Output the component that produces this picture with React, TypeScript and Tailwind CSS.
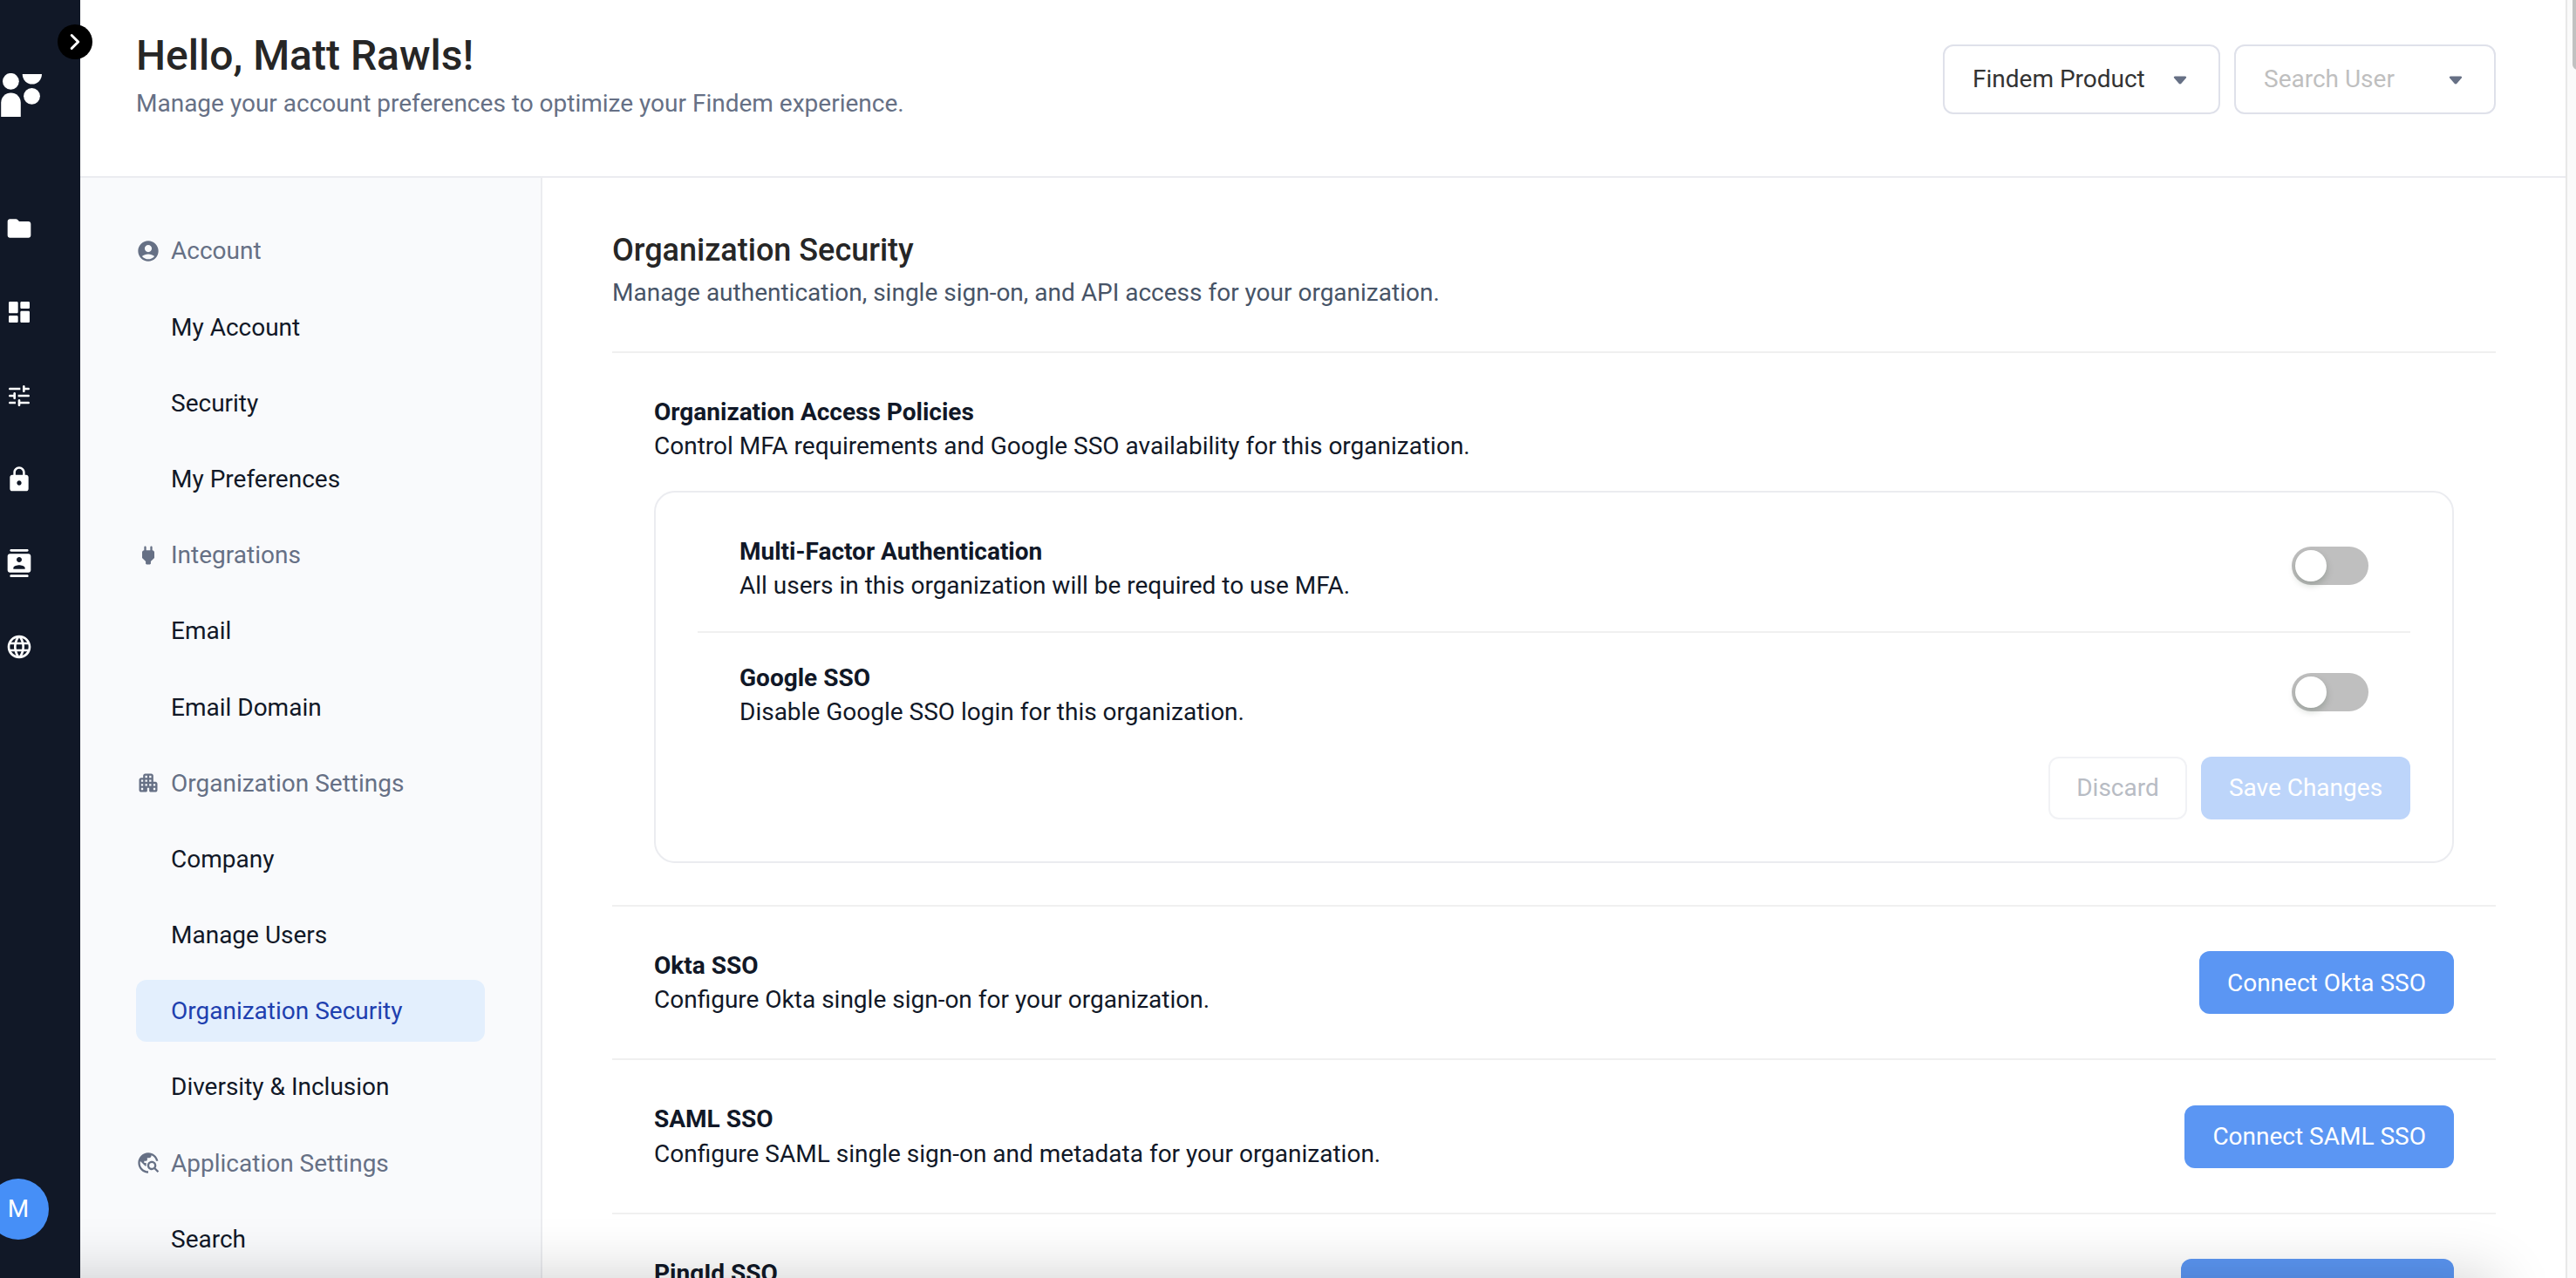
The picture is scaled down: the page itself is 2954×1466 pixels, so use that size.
import { ReactNode } from "react";
import { MdLanguage, MdLock, MdTravelExplore } from "react-icons/md";

const icons = {
    folder: "M10.59 4.59C10.21 4.21 9.7 4 9.17 4H4c-1.1 0-1.99.9-1.99 2L2 18c0 1.1.9 2 2 2h16c1.1 0 2-.9 2-2V8c0-1.1-.9-2-2-2h-8z",
    dashboard:
        "M4 13h6c.55 0 1-.45 1-1V4c0-.55-.45-1-1-1H4c-.55 0-1 .45-1 1v8c0 .55.45 1 1 1zm0 8h6c.55 0 1-.45 1-1v-4c0-.55-.45-1-1-1H4c-.55 0-1 .45-1 1v4c0 .55.45 1 1 1zm10 0h6c.55 0 1-.45 1-1v-8c0-.55-.45-1-1-1h-6c-.55 0-1 .45-1 1v8c0 .55.45 1 1 1zM13 4v4c0 .55.45 1 1 1h6c.55 0 1-.45 1-1V4c0-.55-.45-1-1-1h-6c-.55 0-1 .45-1 1z",
    tune: "M3 18c0 .55.45 1 1 1h5v-2H4c-.55 0-1 .45-1 1zM3 6c0 .55.45 1 1 1h9V5H4c-.55 0-1 .45-1 1zm10 14v-1h7c.55 0 1-.45 1-1s-.45-1-1-1h-7v-1c0-.55-.45-1-1-1s-1 .45-1 1v4c0 .55.45 1 1 1s1-.45 1-1zM7 10v1H4c-.55 0-1 .45-1 1s.45 1 1 1h3v1c0 .55.45 1 1 1s1-.45 1-1v-4c0-.55-.45-1-1-1s-1 .45-1 1zm14 2c0-.55-.45-1-1-1h-9v2h9c.55 0 1-.45 1-1zm-5-3c.55 0 1-.45 1-1V7h3c.55 0 1-.45 1-1s-.45-1-1-1h-3V4c0-.55-.45-1-1-1s-1 .45-1 1v4c0 .55.45 1 1 1z",
    contacts:
        "M5 0h14c.55 0 1 .45 1 1s-.45 1-1 1H5c-.55 0-1-.45-1-1s.45-1 1-1zM5 22h14c.55 0 1 .45 1 1s-.45 1-1 1H5c-.55 0-1-.45-1-1s.45-1 1-1zM20 4H4c-1.1 0-2 .9-2 2v12c0 1.1.9 2 2 2h16c1.1 0 2-.9 2-2V6c0-1.1-.9-2-2-2zm-8 2.75c1.24 0 2.25 1.01 2.25 2.25s-1.01 2.25-2.25 2.25S9.75 10.24 9.75 9 10.76 6.75 12 6.75zM17 17H7v-.75c0-1.67 3.33-2.5 5-2.5s5 .83 5 2.5V17z",
    account:
        "M12 2C6.48 2 2 6.48 2 12s4.48 10 10 10 10-4.48 10-10S17.52 2 12 2zm0 4c1.93 0 3.5 1.57 3.5 3.5S13.93 13 12 13s-3.5-1.57-3.5-3.5S10.07 6 12 6zm0 14c-2.03 0-4.43-.82-6.14-2.88C7.55 15.8 9.68 15 12 15s4.45.8 6.14 2.12C16.43 19.18 14.03 20 12 20z",
    power: "M16 7V4c0-.55-.45-1-1-1s-1 .45-1 1v3h-4V4c0-.55-.45-1-1-1s-1 .45-1 1v3h-.01C6.89 7 6 7.89 6 8.98v5.52L9.5 18v2c0 .55.45 1 1 1h3c.55 0 1-.45 1-1v-2l3.5-3.51V9c0-1.1-.9-2-2-2z",
    apartment:
        "M17 11V5c0-1.1-.9-2-2-2H9c-1.1 0-2 .9-2 2v2H5c-1.1 0-2 .9-2 2v10c0 1.1.9 2 2 2h5c.55 0 1-.45 1-1v-3h2v3c0 .55.45 1 1 1h5c1.1 0 2-.9 2-2v-6c0-1.1-.9-2-2-2h-2zM7 19H5v-2h2v2zm0-4H5v-2h2v2zm0-4H5V9h2v2zm4 4H9v-2h2v2zm0-4H9V9h2v2zm0-4H9V5h2v2zm4 8h-2v-2h2v2zm0-4h-2V9h2v2zm0-4h-2V5h2v2zm4 12h-2v-2h2v2zm0-4h-2v-2h2v2z",
};

function Icon({ path, className }: { path: string; className: string }) {
    return (
        <svg viewBox="0 0 24 24" fill="currentColor" className={className}>
            <path d={path} />
        </svg>
    );
}

const menu = [
    {
        title: "Account",
        icon: <Icon path={icons.account} className="size-7" />,
        items: ["My Account", "Security", "My Preferences"],
    },
    {
        title: "Integrations",
        icon: <Icon path={icons.power} className="size-7" />,
        items: ["Email", "Email Domain"],
    },
    {
        title: "Organization Settings",
        icon: <Icon path={icons.apartment} className="size-7" />,
        items: ["Company", "Manage Users", "Organization Security", "Diversity & Inclusion"],
    },
    {
        title: "Application Settings",
        icon: <MdTravelExplore className="size-7" />,
        items: ["Search"],
    },
];

const policies = [
    {
        title: "Multi-Factor Authentication",
        description: "All users in this organization will be required to use MFA.",
    },
    {
        title: "Google SSO",
        description: "Disable Google SSO login for this organization.",
    },
];

const providers = [
    {
        title: "Okta SSO",
        description: "Configure Okta single sign-on for your organization.",
        action: "Connect Okta SSO",
    },
    {
        title: "SAML SSO",
        description: "Configure SAML single sign-on and metadata for your organization.",
        action: "Connect SAML SSO",
    },
    {
        title: "PingId SSO",
        description: "Configure PingId single sign-on for your organization.",
        action: "Connect PingId SSO",
    },
];

function Rail() {
    return (
        <nav className="relative z-10 flex w-[92px] shrink-0 flex-col bg-[#111827] pt-[84px] pb-11 text-white">
            <svg viewBox="0 0 48 50" fill="currentColor" className="h-[50px] w-12 shrink-0">
                <circle cx="12.4" cy="9.3" r="9.4" />
                <path d="M25.7 1H48a11.15 11.6 0 0 1-22.3 0z" />
                <circle cx="36.5" cy="26.3" r="9.4" />
                <path d="M1.2 50V33.7a11.3 11.3 0 0 1 22.6 0V50z" />
            </svg>
            <div className="mt-28 ml-1.5 flex flex-col gap-16">
                <Icon path={icons.folder} className="size-8" />
                <Icon path={icons.dashboard} className="size-8" />
                <Icon path={icons.tune} className="size-8" />
                <MdLock className="size-8" />
                <Icon path={icons.contacts} className="size-8" />
                <MdLanguage className="size-8" />
            </div>
            <div className="mt-auto -ml-3.5 flex size-[70px] items-center justify-center rounded-full bg-[#468ff7] text-[28px]">
                M
            </div>
            {/* Expand button, straddles the rail's edge */}
            <button className="absolute top-7 -right-3.5 flex size-10 items-center justify-center rounded-full bg-black">
                <svg viewBox="0 0 12 20" fill="none" stroke="currentColor" strokeWidth="3" strokeLinecap="round" strokeLinejoin="round" className="h-5 w-3">
                    <path d="M2.2 2.5 9.7 10l-7.5 7.5" />
                </svg>
            </button>
        </nav>
    );
}

function Select({ children, className }: { children: ReactNode; className: string }) {
    return (
        <div className={`flex h-20 items-center justify-between rounded-xl border-2 border-[#dfe1ea] pr-9 pl-8 ${className}`}>
            <span>{children}</span>
            <svg viewBox="0 0 16 10" className="mt-0.5 h-2.5 w-4 fill-[#667085]">
                <path d="M2.2.5h11.6c1.3 0 1.8 1.2 1 2.1L9.4 8.7c-.8.9-2 .9-2.8 0L1.2 2.6C.4 1.7.9.5 2.2.5z" />
            </svg>
        </div>
    );
}

function SideMenu() {
    return (
        <aside className="flex w-[530px] shrink-0 flex-col gap-4 border-r-2 border-[#ebecf0] bg-[#f9fafc] px-16 pt-[48.4px]">
            {menu.map((group) => (
                <div key={group.title} className="flex flex-col gap-4">
                    <div className="flex h-[71.2px] items-center gap-3 text-[#667085]">
                        {group.icon}
                        {group.title}
                    </div>
                    {group.items.map((item) => (
                        <a
                            key={item}
                            className={`flex h-[71.2px] items-center rounded-xl pl-10 ${
                                item === "Organization Security" ? "bg-[#e3effd] text-[#1e40af]" : "text-[#111827]"
                            }`}
                        >
                            {item}
                        </a>
                    ))}
                </div>
            ))}
        </aside>
    );
}

function Heading({ title, description }: { title: string; description: string }) {
    return (
        <div>
            <h3 className="font-bold">{title}</h3>
            <p>{description}</p>
        </div>
    );
}

function Toggle() {
    return (
        <button className="mt-3.5 flex h-11 w-[88px] rounded-full bg-[#bfbfbf] p-1">
            <span className="size-9 rounded-full bg-white shadow-[0_4px_8px_rgba(0,35,11,0.2)]" />
        </button>
    );
}

export default function App() {
    return (
        <div className="relative flex h-[1466px] w-[2954px] overflow-hidden bg-white font-['Roboto',sans-serif] text-[28px] leading-[39.2px] text-[#111827]">
            <Rail />

            <div className="flex min-w-0 flex-1 flex-col border-r-2 border-[#e8e8e8]">
                <header className="flex h-[204px] shrink-0 items-start justify-between border-b-2 border-[#ebecf0] pr-20 pl-16">
                    <div className="pt-9">
                        <h1 className="text-5xl leading-[56px] font-medium text-[#262626]">Hello, Matt Rawls!</h1>
                        <p className="mt-[7px] text-[#667085]">Manage your account preferences to optimize your Findem experience.</p>
                    </div>
                    <div className="flex gap-4 pt-[51px]">
                        <Select className="w-[318px] text-[#333333]">Findem Product</Select>
                        <Select className="w-[300px] text-[#bfbfbf]">Search User</Select>
                    </div>
                </header>

                <div className="flex min-h-0 flex-1">
                    <SideMenu />

                    <main className="flex-1 px-20 pt-[60px]">
                        <h2 className="text-4xl leading-[46.8px] font-medium text-[#262626]">Organization Security</h2>
                        <p className="mt-[4.8px] text-[#475467]">
                            Manage authentication, single sign-on, and API access for your organization.
                        </p>

                        <section className="mt-12 border-t-2 border-[#f0f0f0] px-12 py-12">
                            <Heading
                                title="Organization Access Policies"
                                description="Control MFA requirements and Google SSO availability for this organization."
                            />
                            <div className="mt-8 rounded-3xl border-2 border-[#ebecf0] px-12 pt-4 pb-12">
                                <div className="divide-y-2 divide-[#f0f0f0]">
                                    {policies.map((policy) => (
                                        <div key={policy.title} className="flex items-start justify-between px-12 py-8">
                                            <Heading {...policy} />
                                            <Toggle />
                                        </div>
                                    ))}
                                </div>
                                <div className="flex justify-end gap-4">
                                    <button className="h-[72px] w-[159px] rounded-xl border-2 border-[#f1f2f5] text-[#b8bcc4]">Discard</button>
                                    <button className="h-[72px] w-60 rounded-xl bg-[#bdd5fa] text-white">Save Changes</button>
                                </div>
                            </div>
                        </section>

                        {providers.map(({ action, ...provider }) => (
                            <section key={action} className="flex items-center justify-between border-t-2 border-[#f0f0f0] px-12 py-12">
                                <Heading {...provider} />
                                <button className="h-[72px] rounded-xl bg-[#5b96f3] px-8 text-white">{action}</button>
                            </section>
                        ))}
                    </main>
                </div>
            </div>

            {/* Scrollbar */}
            <div className="w-2.5 shrink-0 overflow-hidden bg-[#fafafa]">
                <div className="ml-1.5 h-20 w-3 rounded-b-full bg-[#c1c1c1]" />
            </div>

            {/* Shadow rising from the bottom edge */}
            <div className="pointer-events-none absolute top-full left-0 h-20 w-[2860px] shadow-[0_0_70px_rgba(0,0,0,0.2)]" />
        </div>
    );
}
